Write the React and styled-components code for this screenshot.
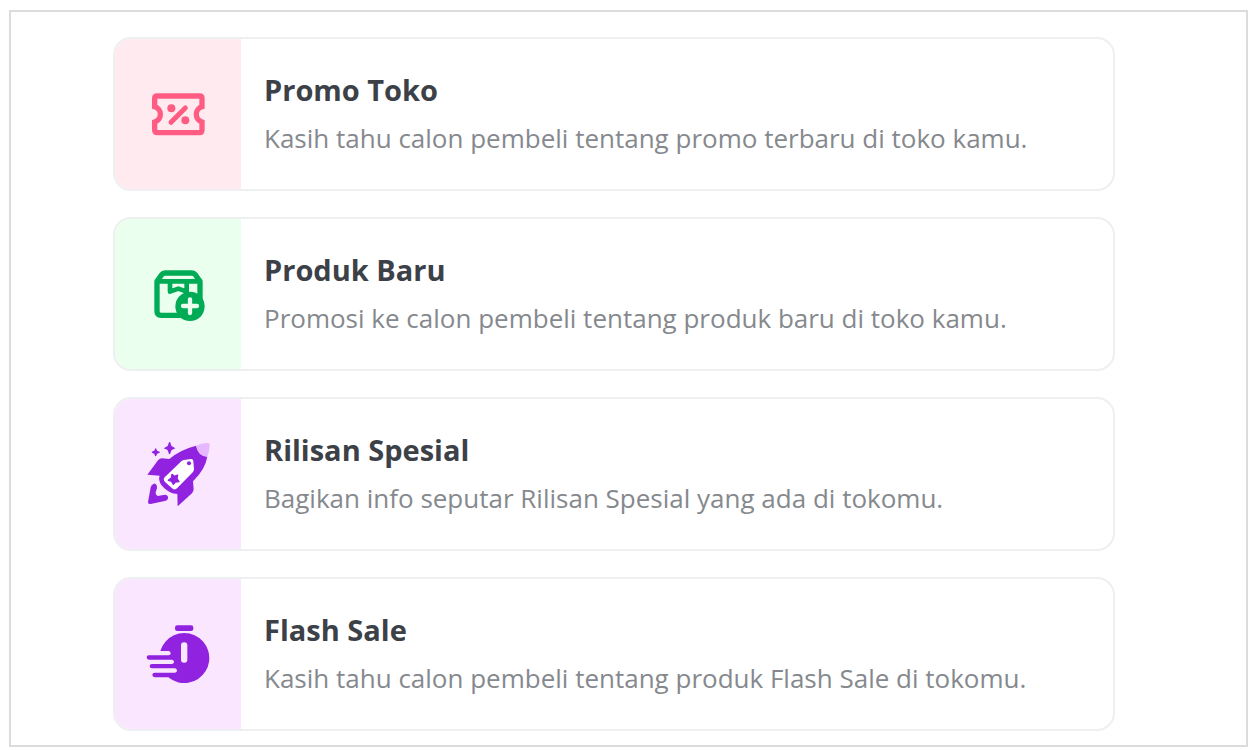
import React from 'react';
import styled, { createGlobalStyle } from 'styled-components';

const GlobalStyle = createGlobalStyle`
  * {
    box-sizing: border-box;
  }

  body {
    margin: 0;
    background-color: #ffffff;
    font-family: 'Open Sans', 'Noto Sans', sans-serif;
  }
`;

const Frame = styled.main`
  margin: 10px 7px 4px 9px;
  padding: 25px 131px 14px 102px;
  border: 2px solid #dcdcdc;
`;

const CardList = styled.ul`
  display: flex;
  flex-direction: column;
  gap: 26px;
  margin: 0;
  padding: 0;
  list-style: none;
`;

const Card = styled.button`
  display: flex;
  width: 100%;
  min-height: 154px;
  padding: 0;
  overflow: hidden;
  border: 2px solid #edeff0;
  border-radius: 18px;
  background-color: #ffffff;
  font-family: inherit;
  text-align: left;
  cursor: pointer;
`;

const IconPanel = styled.span`
  display: flex;
  flex: none;
  align-items: center;
  justify-content: center;
  align-self: stretch;
  width: 126px;
  background-color: ${({ $background }) => $background};
  color: ${({ $color }) => $color};

  svg {
    width: 72px;
    height: 72px;
  }
`;

const CardText = styled.span`
  display: flex;
  flex-direction: column;
  justify-content: center;
  align-self: center;
  gap: 8px;
  padding: 0 23px;
`;

const Title = styled.span`
  color: #3c4148;
  font-size: 29px;
  font-weight: 700;
  line-height: 40px;
`;

const Description = styled.span`
  color: #85898e;
  font-size: 26px;
  line-height: 40px;
`;

const TicketIcon = () => (
  <svg viewBox="6 -6 216 216" fill="none" stroke="currentColor" aria-hidden="true">
    <path
      d="M52 48H179Q186 48 186 55V80A24 24 0 0 0 186 126V149Q186 158 179 158H52Q44 158 44 149V126A24 24 0 0 0 44 80V55Q44 48 52 48Z"
      strokeWidth="16"
    />
    <path d="M93 127L136 84" strokeWidth="15" strokeLinecap="round" />
    <circle cx="94" cy="85" r="12" fill="currentColor" stroke="none" />
    <circle cx="136" cy="121" r="12" fill="currentColor" stroke="none" />
  </svg>
);

const BoxPlusIcon = () => (
  <svg viewBox="6 0 216 216" fill="none" stroke="currentColor" aria-hidden="true">
    <path
      d="M51 70L65 50Q69 45 75 45H156Q162 45 166 50L180 70V160Q180 172 168 172H63Q51 172 51 160Z"
      strokeWidth="16"
      strokeLinejoin="round"
    />
    <path d="M51 70H180" strokeWidth="14" />
    <path d="M90 72V101L115 92L140 101V72" strokeWidth="14" strokeLinejoin="round" />
    <circle cx="150" cy="145" r="44" fill="currentColor" stroke="none" />
    <path d="M150 124V165M129 144H171" stroke="#eaffee" strokeWidth="13" strokeLinecap="round" />
  </svg>
);

const RocketIcon = () => (
  <svg viewBox="12 12 216 216" fill="currentColor" aria-hidden="true">
    <path d="M174 35Q124 48 94 75L72 73Q65 73 60 79L28 122L65 125Q60 137 70 153Q84 170 103 178L118 180L119 217L162 178Q167 173 167 164L165 142Q202 105 208 68Q184 65 174 35Z" />
    <path d="M174 35Q194 25 211 27Q216 28 215 33Q215 50 208 68Q179 67 174 35Z" fill="#e5b8ff" />
    <path
      d="M137 78L159 75Q166 75 166 82L168 105Q168 110 165 114L117 163Q111 169 104 164L81 144Q74 137 80 130L130 82Q133 79 137 78Z"
      fill="#ffffff"
    />
    <circle cx="153" cy="88" r="6" />
    <path
      d="M102 121L109 127L119 123L117 134L123 143L112 144L106 151L101 142L91 139L100 132Z"
      stroke="currentColor"
      strokeWidth="4"
      strokeLinejoin="round"
    />
    <path d="M95 24Q98 24 98 29Q99 38 106 39L112 43L106 46Q99 48 98 55Q97 61 95 61Q92 61 91 54Q90 47 84 46L77 43L84 39Q90 38 91 31Q92 24 95 24Z" />
    <path d="M53 43Q56 43 56 49Q57 51 61 52Q66 53 66 55Q66 57 61 58Q57 59 56 62Q55 67 53 67Q51 67 50 62Q49 59 45 58Q41 57 41 55Q41 53 45 52Q49 51 50 48Q51 43 53 43Z" />
    <path d="M48 149Q53 148 56 154Q59 160 54 172Q50 182 60 186Q66 185 77 183Q87 181 90 188Q92 198 80 201L38 210Q29 211 30 204L38 160Q40 151 48 149Z" />
  </svg>
);

const StopwatchIcon = () => (
  <svg viewBox="12 6 216 216" fill="none" aria-hidden="true">
    <rect x="111" y="28" width="55" height="17" rx="7" fill="currentColor" />
    <path
      d="M67 105A75 75 0 1 1 91 184H50Q43 183 43 177Q43 170 50 170H111Q117 169 117 164Q117 158 111 157H42Q35 157 35 151Q35 144 42 144H102Q108 143 108 138Q108 132 102 131H32Q26 130 26 124Q26 118 32 118H92Q98 118 98 112Q98 106 92 105Z"
      fill="currentColor"
    />
    <rect x="129" y="79" width="19" height="61" rx="9" fill="#fae7ff" />
  </svg>
);

const promos = [
  {
    title: 'Promo Toko',
    description: 'Kasih tahu calon pembeli tentang promo terbaru di toko kamu.',
    background: '#ffeaef',
    color: '#ff5c84',
    Icon: TicketIcon,
  },
  {
    title: 'Produk Baru',
    description: 'Promosi ke calon pembeli tentang produk baru di toko kamu.',
    background: '#eaffee',
    color: '#00ab56',
    Icon: BoxPlusIcon,
  },
  {
    title: 'Rilisan Spesial',
    description: 'Bagikan info seputar Rilisan Spesial yang ada di tokomu.',
    background: '#fae7ff',
    color: '#9122df',
    Icon: RocketIcon,
  },
  {
    title: 'Flash Sale',
    description: 'Kasih tahu calon pembeli tentang produk Flash Sale di tokomu.',
    background: '#fae7ff',
    color: '#9122df',
    Icon: StopwatchIcon,
  },
];

const App = () => {
  return (
    <>
      <GlobalStyle />
      <Frame>
        <CardList>
          {promos.map(({ title, description, background, color, Icon }) => (
            <li key={title}>
              <Card type="button">
                <IconPanel $background={background} $color={color}>
                  <Icon />
                </IconPanel>
                <CardText>
                  <Title>{title}</Title>
                  <Description>{description}</Description>
                </CardText>
              </Card>
            </li>
          ))}
        </CardList>
      </Frame>
    </>
  );
};

export default App;
